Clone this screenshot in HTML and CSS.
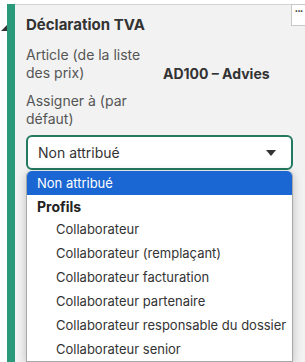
FILE: index.html
```html
<!DOCTYPE html>
<html lang="fr">
<head>
<meta charset="utf-8">
<link rel="stylesheet" href="styles.css">
</head>
<body>
<div class="page">
  <div class="gutter">
    <svg class="corner" width="6" height="6" viewBox="0 0 6 6"><polygon points="6,0 6,6 0,6" fill="#333"/></svg>
  </div>
  <div class="accent"></div>
  <div class="panel">
    <button class="more" type="button">&middot;&middot;&middot;</button>
    <h2 class="title">Déclaration TVA</h2>
    <div class="row">
      <div class="label">Article (de la liste des prix)</div>
      <div class="value">AD100 – Advies</div>
    </div>
    <div class="row">
      <div class="label">Assigner à (par défaut)</div>
    </div>
    <div class="select">
      <span>Non attribué</span>
      <svg class="caret" width="10" height="6" viewBox="0 0 10 6"><polygon points="0,0 10,0 5,6" fill="#333"/></svg>
    </div>
    <ul class="list">
      <li class="opt selected">Non attribué</li>
      <li class="group">Profils</li>
      <li class="opt sub">Collaborateur</li>
      <li class="opt sub">Collaborateur (remplaçant)</li>
      <li class="opt sub">Collaborateur facturation</li>
      <li class="opt sub">Collaborateur partenaire</li>
      <li class="opt sub">Collaborateur responsable du dossier</li>
      <li class="opt sub">Collaborateur senior</li>
    </ul>
  </div>
</div>
</body>
</html>
```
FILE: styles.css
```css
* { box-sizing: border-box; }
html, body { margin: 0; padding: 0; }
body {
  background: #ffffff;
  font-family: Inter, "Noto Sans", sans-serif;
  color: #333;
  width: 305px;
  height: 362px;
  overflow: hidden;
}
.page {
  display: flex;
  padding-top: 4px;
  height: 362px;
}
.gutter {
  width: 7px;
  flex: none;
}
.corner {
  display: block;
  margin-top: 21px;
  margin-left: 1px;
}
.accent {
  width: 8px;
  flex: none;
  background: #2a9a7b;
}
.panel {
  flex: 1;
  position: relative;
  background: #f2f2f2;
  border-top: 1px solid #d2d2d2;
  padding: 9px 12px 0 11px;
}
.more {
  position: absolute;
  top: -1px;
  right: 0;
  width: 14px;
  height: 22px;
  padding: 0 0 8px 0;
  border: 1px solid #c8c8c8;
  border-right: none;
  background: #fff;
  font: bold 11px/1 Inter, sans-serif;
  color: #333;
  letter-spacing: -1px;
}
.title {
  margin: 0 0 10px 0;
  font-size: 15px;
  line-height: 22px;
  font-weight: 700;
  color: #333;
}
.row {
  display: flex;
  font-size: 14px;
  line-height: 18px;
  color: #555;
  margin-bottom: 9px;
}
.label {
  width: 137px;
  flex: none;
}
.value {
  padding-top: 19px;
  font-weight: 700;
  color: #333;
}
.select {
  margin-top: -2px;
  height: 35px;
  border: 2px solid #237a60;
  border-radius: 6px;
  background: #fff;
  display: flex;
  align-items: center;
  justify-content: space-between;
  padding: 0 15px 0 10px;
  font-size: 14px;
  color: #333;
}
.caret { display: block; }
.list {
  list-style: none;
  margin: 1px 0 0 0;
  padding: 0;
  width: 267px;
  background: #fff;
  border: 1px solid #a8a8a8;
  border-top: none;
  border-radius: 5px 5px 0 0;
  box-shadow: 0 2px 10px rgba(0,0,0,0.22);
  font-size: 13px;
}
.opt, .group {
  height: 24px;
  line-height: 24px;
  padding-left: 10px;
  white-space: nowrap;
  color: #333;
}
.selected {
  background: #1a66d2;
  color: #fff;
  border-radius: 5px 5px 0 0;
}
.group {
  height: 22px;
  line-height: 24px;
  font-weight: 700;
  color: #222;
  font-size: 14px;
}
.sub { padding-left: 29px; }
```
